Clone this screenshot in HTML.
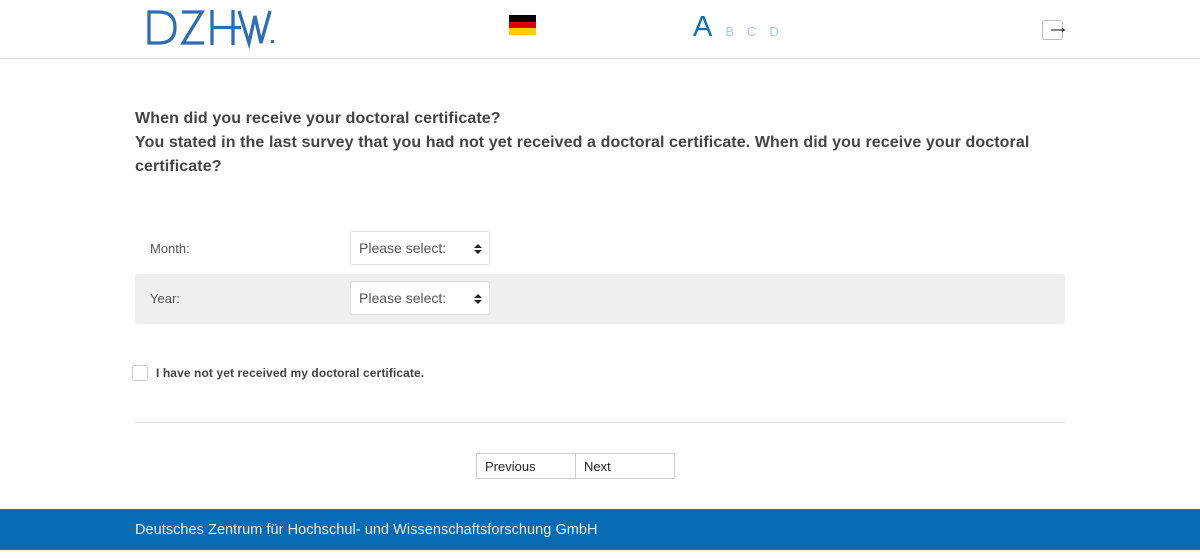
<!DOCTYPE html>
<html><head><meta charset="utf-8"><style>
body{margin:0;width:1200px;height:559px;background:#fff;font-family:"Liberation Sans",sans-serif;position:relative;overflow:hidden}
.hdr{position:absolute;left:0;top:0;width:1200px;height:58px;border-bottom:1px solid #ddd}
.flag{position:absolute;left:509px;top:15px;width:27px;height:20px}
.flag div{height:33.3%}
.steps{position:absolute;left:693px;top:11px;color:#0f6fbf;font-size:29px}
.steps span{font-size:13px;color:#a9cbe8;margin-left:13px}
.exit{position:absolute;left:1042px;top:20px;width:19px;height:18px;border:1px solid #bbb;border-radius:3px}
.q{position:absolute;left:135px;top:107px;font-size:16px;font-weight:bold;color:#444;line-height:24px;width:930px;letter-spacing:0.1px}
.row{position:absolute;left:135px;width:930px;height:50px;font-size:13px;color:#555}
.row .l{position:absolute;left:15px;top:17px}
.sel{position:absolute;left:215px;top:7px;width:140px;height:34px;border:1px solid #ddd;border-radius:3px;background:#fff;font-size:14px;color:#555;box-sizing:border-box;padding:8px 0 0 8px}
.sel svg{position:absolute;right:7px;top:11px}
.cb{position:absolute;left:132px;top:365px;width:14px;height:14px;border:1px solid #ccc;border-radius:3px}
.cbl{position:absolute;left:156px;top:366px;font-size:12px;font-weight:bold;color:#444;letter-spacing:0.1px}
.hr{position:absolute;left:135px;top:422px;width:930px;border-top:1px solid #ddd}
.btn{position:absolute;top:453px;width:100px;height:26px;border:1px solid #ccc;box-sizing:border-box;font-size:13px;padding:5px 0 0 8px;color:#222}
.ftr{position:absolute;left:0;top:509px;width:1200px;height:41px;background:#066bb3;color:#e8f0f8;font-size:14.5px;letter-spacing:0.05px}
.ftr div{position:absolute;left:135px;top:13px}
</style></head><body>
<div class="hdr">
<svg width="140" height="50" style="position:absolute;left:140px;top:0" fill="none" stroke="#2d6db5" stroke-width="3.3">
<path d="M9 12H19Q35 12 35 27.5Q35 43 19 43H9Z"/>
<path d="M42 12H62L43 43H64"/>
<path d="M72 10V45M93 10V45M72 27.5H101"/>
<path d="M99 11L109 43L115 16L121 43L130 11"/>
<rect x="131" y="40" width="3" height="3" fill="#2d6db5" stroke="none"/>
</svg>
<div class="flag"><div style="background:#000"></div><div style="background:#dd0000"></div><div style="background:#ffce00"></div></div>
<div class="steps">A<span>B</span><span>C</span><span>D</span></div>
<div class="exit"><svg width="19" height="18" style="position:absolute;left:5px;top:0"><path d="M3 9H17" stroke="#333" stroke-width="1.2"/><path d="M14 6.5L17 9L14 11.5Z" fill="#333"/></svg></div>
</div>
<div class="q">When did you receive your doctoral certificate?<br>You stated in the last survey that you had not yet received a doctoral certificate. When did you receive your doctoral certificate?</div>
<div class="row" style="top:224px"><div class="l">Month:</div><div class="sel">Please select:<svg width="8" height="12"><path d="M0 5L4 1L8 5Z M0 7L4 11L8 7Z" fill="#222"/></svg></div></div>
<div class="row" style="top:274px;background:#efefef;border-radius:3px"><div class="l">Year:</div><div class="sel">Please select:<svg width="8" height="12"><path d="M0 5L4 1L8 5Z M0 7L4 11L8 7Z" fill="#222"/></svg></div></div>
<div class="cb"></div><div class="cbl">I have not yet received my doctoral certificate.</div>
<div class="hr"></div>
<div class="btn" style="left:476px">Previous</div>
<div class="btn" style="left:575px">Next</div>
<div class="ftr"><div>Deutsches Zentrum für Hochschul- und Wissenschaftsforschung GmbH</div></div>
</body></html>
